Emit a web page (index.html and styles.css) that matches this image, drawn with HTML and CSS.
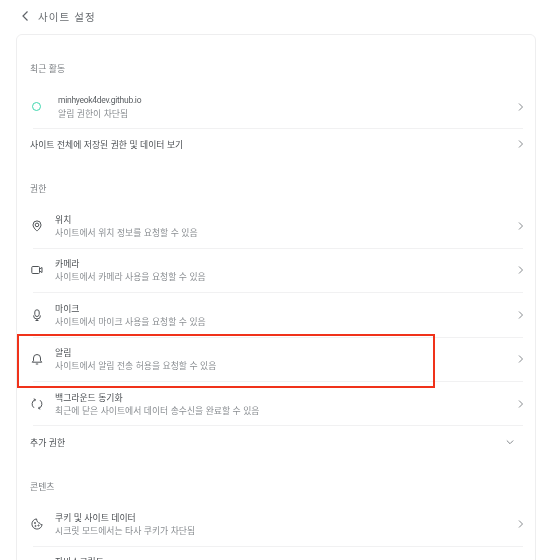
FILE: index.html
```html
<!DOCTYPE html>
<html lang="ko">
  <head>
    <meta charset="utf-8" />
    <title>사이트 설정</title>
    <link rel="stylesheet" href="styles.css">
  </head>
  <body>
    <svg width="0" height="0" class="defs">
      <symbol id="chevron-right" viewBox="0 0 10 10"><path d="M3 1.500 6.500 5 3 8.500" /></symbol>
    </svg>
    <div class="page">
      <div class="top-bar">
        <svg class="back" viewBox="0 0 10 12"><path d="M7.500 1.500 3 6l4.500 4.500" /></svg>
        <span class="top-title">사이트 설정</span>
      </div>

      <div class="card">
        <div class="section-title first">최근 활동</div>
        <div class="row">
          <span class="row-icon"><span class="site-ring"></span></span>
          <div class="row-text site-text">
            <div class="row-name site-name">minhyeok4dev.github.io</div>
            <div class="row-sub">알림 권한이 차단됨</div>
          </div>
          <svg class="chevron"><use href="#chevron-right" /></svg>
        </div>
        <div class="row single">
          <div class="row-text"><div class="row-name">사이트 전체에 저장된 권한 및 데이터 보기</div></div>
          <svg class="chevron"><use href="#chevron-right" /></svg>
        </div>

        <div class="section-title">권한</div>
        <div class="row">
          <span class="row-icon">
            <svg viewBox="0 0 12 12"><path d="M6 .9a4 4 0 0 0-4 4c0 2.700 4 6.200 4 6.200s4-3.500 4-6.200a4 4 0 0 0-4-4Z" /><circle cx="6" cy="4.900" r="1.800" /></svg>
          </span>
          <div class="row-text">
            <div class="row-name">위치</div>
            <div class="row-sub">사이트에서 위치 정보를 요청할 수 있음</div>
          </div>
          <svg class="chevron"><use href="#chevron-right" /></svg>
        </div>
        <div class="row">
          <span class="row-icon">
            <svg viewBox="0 0 12 12"><rect x=".8" y="2.500" width="7.700" height="7" rx="1" /><path d="M8.500 5 11 3.500v5L8.500 7" /></svg>
          </span>
          <div class="row-text">
            <div class="row-name">카메라</div>
            <div class="row-sub">사이트에서 카메라 사용을 요청할 수 있음</div>
          </div>
          <svg class="chevron"><use href="#chevron-right" /></svg>
        </div>
        <div class="row">
          <span class="row-icon">
            <svg viewBox="0 0 12 12"><rect x="3.800" y=".8" width="4.400" height="6.700" rx="2.200" /><path d="M2.500 6.500a3.500 3.500 0 0 0 7 0M6 10v1.500M4.500 11.500h3" /></svg>
          </span>
          <div class="row-text">
            <div class="row-name">마이크</div>
            <div class="row-sub">사이트에서 마이크 사용을 요청할 수 있음</div>
          </div>
          <svg class="chevron"><use href="#chevron-right" /></svg>
        </div>
        <div class="row">
          <span class="row-icon">
            <svg viewBox="0 0 12 12"><path d="M1.200 9.200h9.600L9.500 7.800V5a3.500 3.500 0 0 0-7 0v2.800L1.200 9.200ZM4.800 11h2.400" /></svg>
          </span>
          <div class="row-text">
            <div class="row-name">알림</div>
            <div class="row-sub">사이트에서 알림 전송 허용을 요청할 수 있음</div>
          </div>
          <svg class="chevron"><use href="#chevron-right" /></svg>
        </div>
        <div class="row">
          <span class="row-icon">
            <svg viewBox="0 0 12 12"><path d="M4.200 1.600A4.700 4.700 0 0 0 3 9.800M7.800 10.400A4.700 4.700 0 0 0 9 2.200M2.700 .9l1.700.6-.6 1.700M9.300 11.100l-1.700-.6.6-1.700" /></svg>
          </span>
          <div class="row-text">
            <div class="row-name">백그라운드 동기화</div>
            <div class="row-sub">최근에 닫은 사이트에서 데이터 송수신을 완료할 수 있음</div>
          </div>
          <svg class="chevron"><use href="#chevron-right" /></svg>
        </div>
        <div class="row more-row">
          <div class="row-text"><div class="row-name">추가 권한</div></div>
          <svg class="chevron down" viewBox="0 0 10 10"><path d="M1.800 3.500 5 6.700l3.200-3.200" /></svg>
        </div>

        <div class="section-title content-title">콘텐츠</div>
        <div class="row">
          <span class="row-icon">
            <svg viewBox="0 0 12 12"><path d="M5.500 .9a5.100 5.100 0 1 0 5.600 5.600c-1.300.3-2.300-.4-2.500-1.600C7.200 5 6 4 5.500 .9Z" /><circle cx="4" cy="5" r=".6" /><circle cx="4.500" cy="8" r=".6" /><circle cx="7.500" cy="7.500" r=".6" /></svg>
          </span>
          <div class="row-text">
            <div class="row-name">쿠키 및 사이트 데이터</div>
            <div class="row-sub">시크릿 모드에서는 타사 쿠키가 차단됨</div>
          </div>
          <svg class="chevron"><use href="#chevron-right" /></svg>
        </div>
        <div class="row">
          <span class="row-icon"></span>
          <div class="row-text">
            <div class="row-name">자바스크립트</div>
            <div class="row-sub">사이트에서 자바스크립트를 사용할 수 있음</div>
          </div>
          <svg class="chevron"><use href="#chevron-right" /></svg>
        </div>
      </div>

      <!-- 빨간 강조 표시 -->
      <div class="highlight"></div>
    </div>
  </body>
</html>
```

FILE: styles.css
```css
html,
body {
  margin: 0;
  height: 100%;
  overflow: hidden;
  background: #fff;
}
.defs {
  position: absolute;
}
.page {
  position: relative;
  height: 560px;
  overflow: hidden;
  font-family: "Noto Sans CJK KR", "Noto Sans", sans-serif;
  color: #3c4043;
  filter: blur(0.4px);
}
.top-bar {
  display: flex;
  align-items: center;
  height: 32px;
  padding: 0 0 2px 20px;
}
.back {
  width: 10px;
  height: 12px;
  fill: none;
  stroke: #5f6368;
  stroke-width: 1.2;
}
.top-title {
  margin-left: 8px;
  font-size: 10.5px;
  letter-spacing: 1.1px;
  color: #6a6e72;
}
.card {
  margin: 0 12px 0 16px;
  padding: 0 12px 0 13px;
  height: 600px;
  border: 1px solid #eeeeef;
  border-radius: 6px;
}
.section-title {
  height: 17px;
  margin: 21px 0 7px;
  font-size: 8.85px;
  line-height: 17px;
  color: #7b7f83;
}
.section-title.first {
  margin: 25px 0 8px;
}
.section-title.content-title {
  margin: 19.500px 0 7.500px;
}
.row {
  display: flex;
  align-items: center;
  height: 44.4px;
  margin-left: 3px;
  border-bottom: 1px solid #f1f1f2;
  box-sizing: border-box;
}
.single {
  height: 30px;
  margin-left: 0;
  border-bottom: 0;
}
.more-row {
  height: 32px;
  margin-left: 0;
  border-bottom: 0;
}
.row-icon {
  display: flex;
  justify-content: center;
  flex: none;
  width: 12px;
  margin-left: -2.500px;
  margin-right: 12.500px;
}
.row-icon svg {
  width: 12px;
  height: 12px;
  fill: none;
  stroke: #4f5357;
  stroke-width: 1;
}
.site-ring {
  width: 7px;
  height: 7px;
  border: 1.300px solid #3fd6ae;
  border-radius: 50%;
}
.row-text {
  flex: 1;
  min-width: 0;
}
.site-text {
  padding-left: 3px;
}
.row-name {
  font-size: 8.85px;
  line-height: 13px;
  color: #4a4e52;
}
.site-name {
  font-family: "Roboto", "Noto Sans CJK KR", sans-serif;
  font-size: 8.5px;
  letter-spacing: -0.28px;
  color: #5c6064;
}
.row-sub {
  font-size: 8.85px;
  line-height: 13px;
  color: #8a8e92;
}
.chevron {
  flex: none;
  width: 10px;
  height: 10px;
  margin-right: -3px;
  fill: none;
  stroke: #85898d;
  stroke-width: 1;
}
.chevron.down {
  margin-right: 8px;
}
.highlight {
  position: absolute;
  left: 17px;
  top: 334px;
  width: 413.600px;
  height: 49.600px;
  border: 2.700px solid #f0321a;
}
```
